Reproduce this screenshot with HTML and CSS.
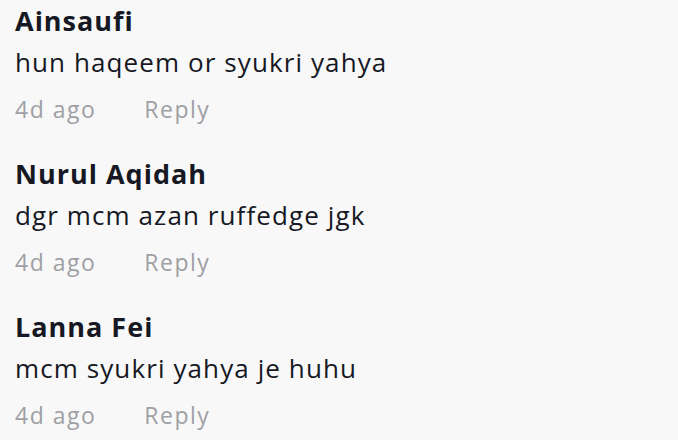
FILE: index.html
```html
<!DOCTYPE html>
<html>
  <head>
    <title>Comments</title>
    <link rel="stylesheet" href="styles.css">
  </head>
  <body>
    <div class="comments">
      <div class="comment">
        <div class="author">Ainsaufi</div>
        <div class="text">hun haqeem or syukri yahya</div>
        <div class="meta">
          <span>4d ago</span>
          <span class="reply">Reply</span>
        </div>
      </div>

      <div class="comment">
        <div class="author">Nurul Aqidah</div>
        <div class="text">dgr mcm azan ruffedge jgk</div>
        <div class="meta">
          <span>4d ago</span>
          <span class="reply">Reply</span>
        </div>
      </div>

      <div class="comment">
        <div class="author">Lanna Fei</div>
        <div class="text">mcm syukri yahya je huhu</div>
        <div class="meta">
          <span>4d ago</span>
          <span class="reply">Reply</span>
        </div>
      </div>
    </div>
  </body>
</html>
```

FILE: styles.css
```css
body {
  margin: 0;
  background: #f8f8f8;
  font-family: 'Open Sans', sans-serif;
  font-variant-ligatures: none;
  color: #161823;
}

.comments {
  display: flex;
  flex-direction: column;
  padding: 0 15px;
}

.comment {
  height: 153px;
}

.author {
  font-size: 27px;
  font-weight: 700;
  line-height: 42px;
  letter-spacing: 1px;
}

.text {
  font-size: 26px;
  line-height: 40px;
  letter-spacing: 1.1px;
}

.meta {
  display: flex;
  gap: 48px;
  margin-top: 11px;
  font-size: 23px;
  line-height: 32px;
  letter-spacing: 1.5px;
  color: #9f9fa4;
}
```
